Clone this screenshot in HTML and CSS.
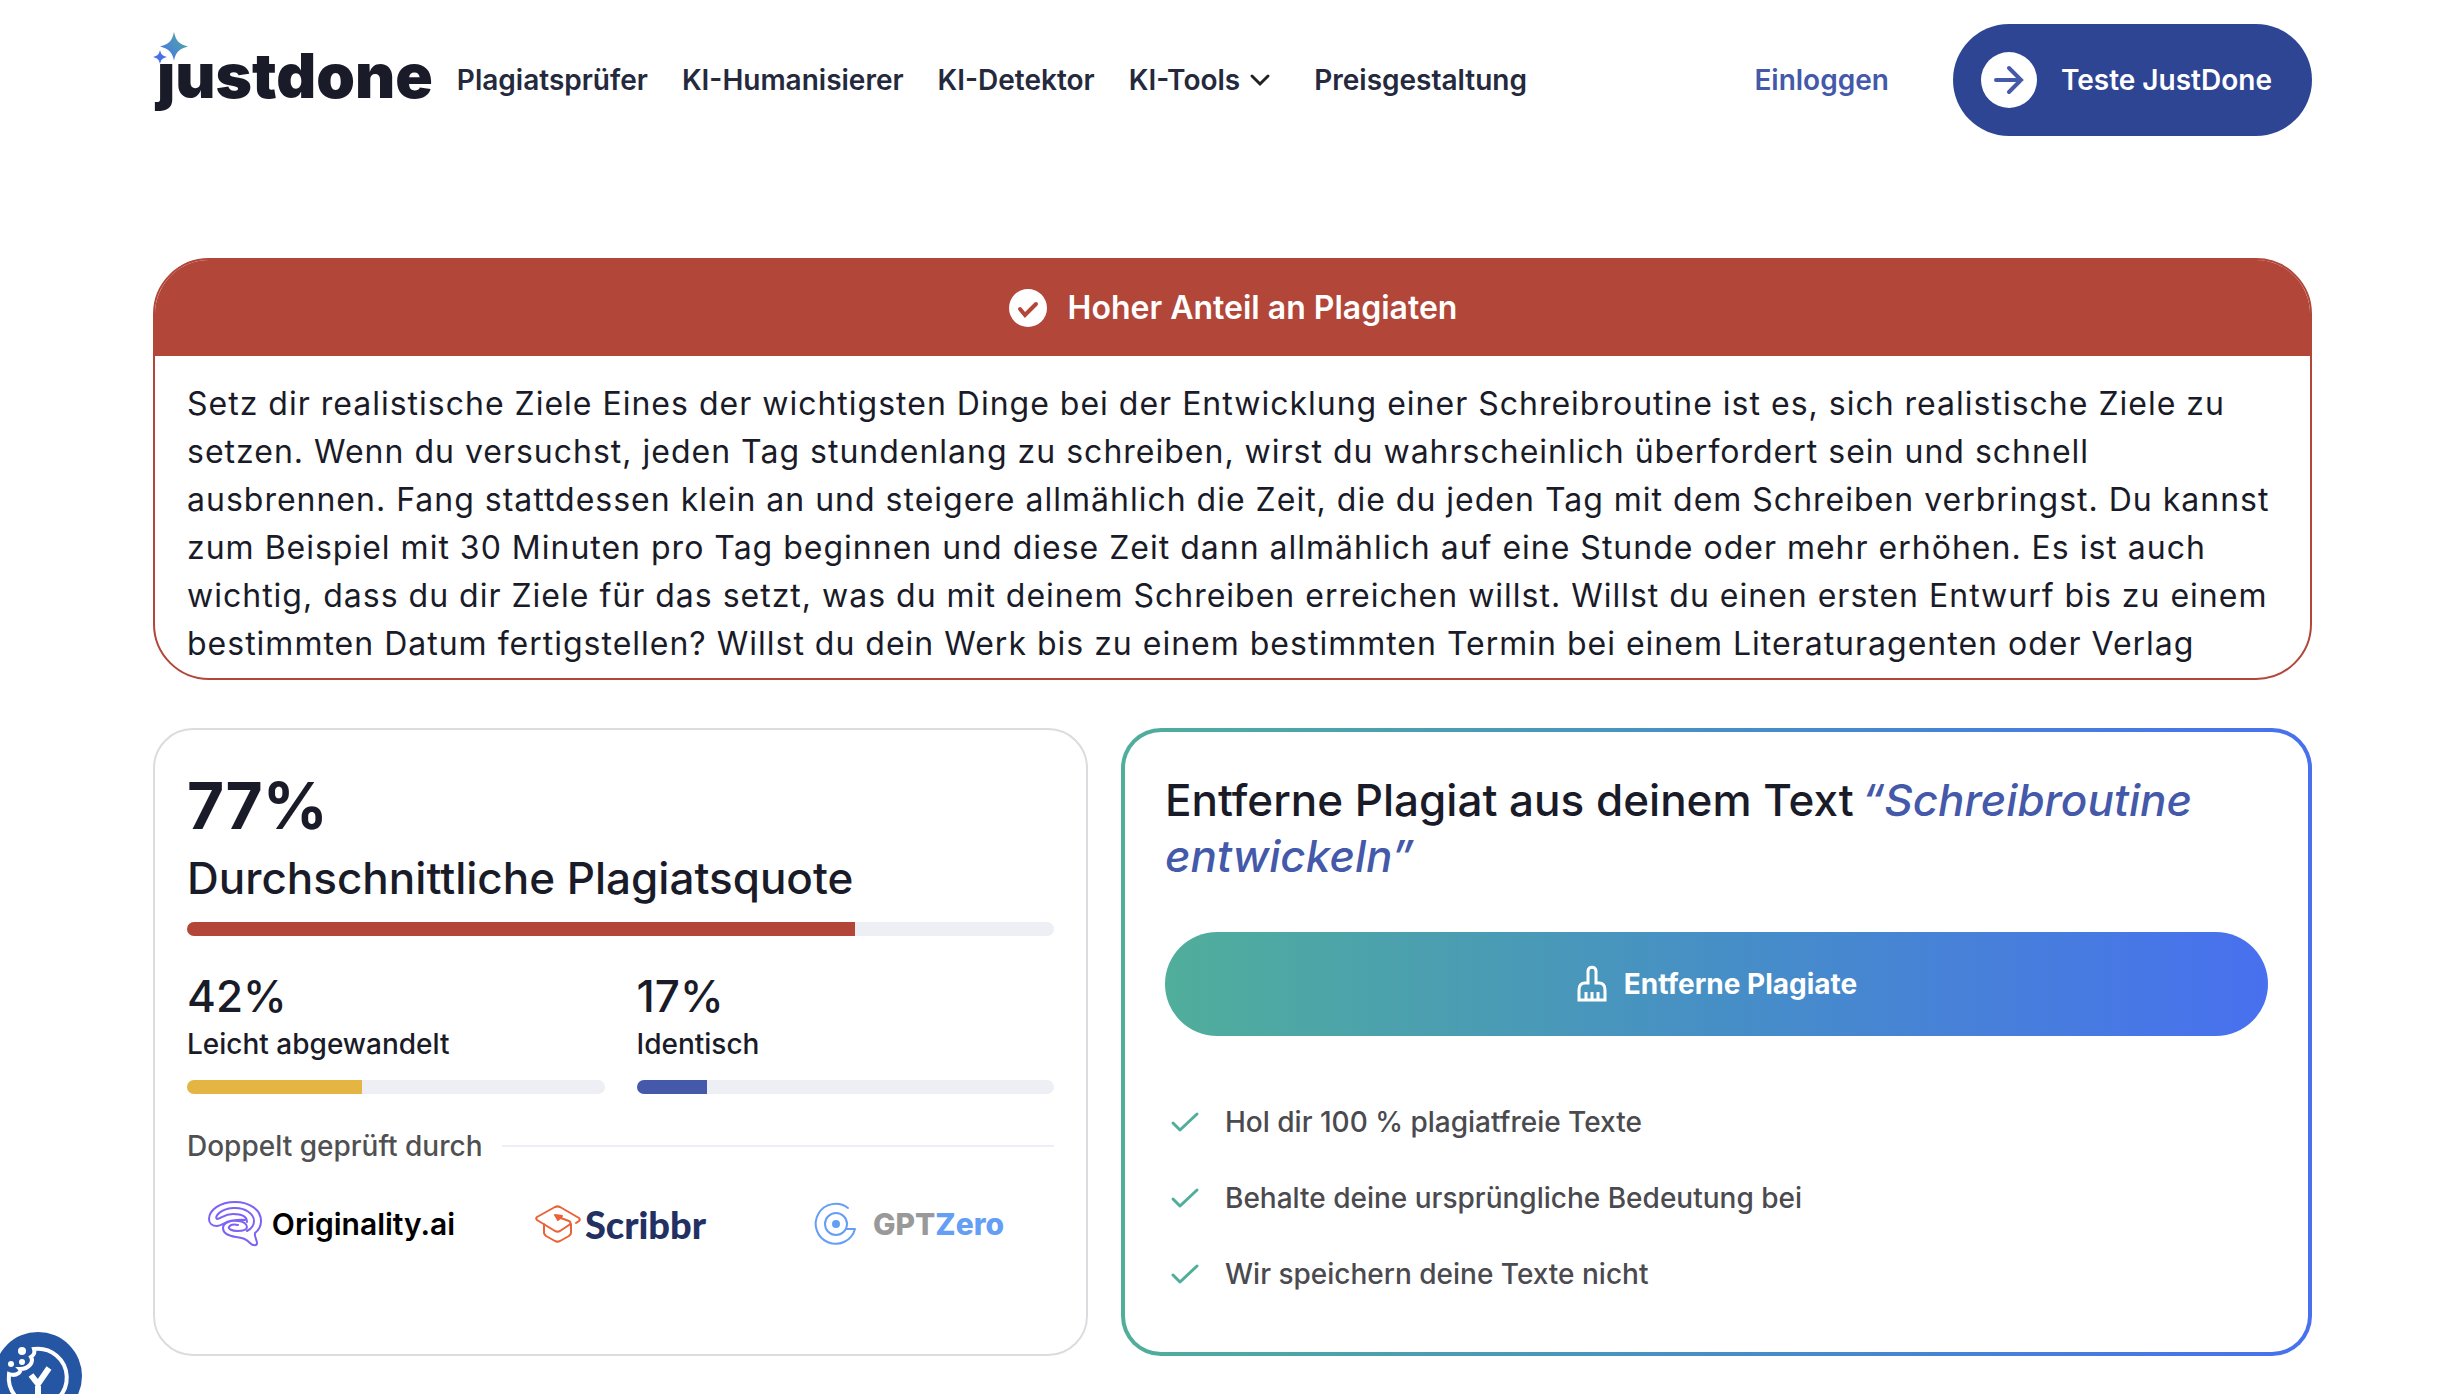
FILE: index.html
```html
<!DOCTYPE html>
<html lang="de">
  <head>
    <meta charset="UTF-8" />
    <meta name="viewport" content="width=device-width, initial-scale=1.0" />
    <title>JustDone Plagiatsprüfer</title>
    <link rel="stylesheet" href="styles.css">
  </head>

  <body>
    <header class="header">
      <a class="logo" href="#" aria-label="justdone">
        <svg class="logo-stars" viewBox="0 0 36 50" aria-hidden="true">
          <defs>
            <linearGradient id="star" x1="1" y1="0" x2="0" y2="1">
              <stop offset="0" stop-color="#50ae9b" />
              <stop offset="1" stop-color="#4870ef" />
            </linearGradient>
          </defs>
          <path fill="url(#star)" d="M21 0c2 9 5 12 14 14.500c-9 2.500-12 5.500-14 14c-2-8.500-5-11.500-14-14c9-2.500 12-5.500 14-14.500z" />
          <path fill="#4870e8" d="M7 18c1 4.500 2.500 6 7 7c-4.500 1-6 2.500-7 7c-1-4.500-2.500-6-7-7c4.500-1 6-2.500 7-7z" />
        </svg>
        <span class="logo-text">ȷustdone</span>
      </a>
      <nav class="nav">
        <a href="#">Plagiatsprüfer</a>
        <a href="#">KI-Humanisierer</a>
        <a href="#">KI-Detektor</a>
        <a class="nav-tools" href="#">KI-Tools
          <svg class="chevron" viewBox="0 0 40 40" aria-hidden="true"><path d="M12 16l8 8l8-8" /></svg>
        </a>
        <a href="#">Preisgestaltung</a>
      </nav>
      <a class="login" href="#">Einloggen</a>
      <button class="try" type="button">
        <span class="try-icon">
          <svg viewBox="0 0 56 56" aria-hidden="true"><path d="M15 28h25M28 16l12 12l-12 12" /></svg>
        </span>
        Teste JustDone
      </button>
    </header>

    <main class="content">
      <section class="result">
        <h2 class="result-title">
          <svg viewBox="0 0 40 40" aria-hidden="true">
            <circle cx="20" cy="20" r="19" fill="#fff" />
            <path d="M12 21l5 6l11-11" fill="none" stroke="#b14639" stroke-width="4" stroke-linecap="round" />
          </svg>
          Hoher Anteil an Plagiaten
        </h2>
        <p class="result-text">
          Setz dir realistische Ziele Eines der wichtigsten Dinge bei der Entwicklung einer Schreibroutine ist es, sich realistische Ziele zu setzen. Wenn du versuchst, jeden Tag stundenlang zu schreiben, wirst du wahrscheinlich überfordert sein und schnell ausbrennen. Fang stattdessen klein an und steigere allmählich die Zeit, die du jeden Tag mit dem Schreiben verbringst. Du kannst zum Beispiel mit 30 Minuten pro Tag beginnen und diese Zeit dann allmählich auf eine Stunde oder mehr erhöhen. Es ist auch wichtig, dass du dir Ziele für das setzt, was du mit deinem Schreiben erreichen willst. Willst du einen ersten Entwurf bis zu einem bestimmten Datum fertigstellen? Willst du dein Werk bis zu einem bestimmten Termin bei einem Literaturagenten oder Verlag
        </p>
      </section>

      <div class="cards">
        <section class="card score">
          <div class="total">77%</div>
          <div class="total-label">Durchschnittliche Plagiatsquote</div>
          <div class="bar"><div class="fill red" style="width: 77%"></div></div>

          <div class="stats">
            <div>
              <div class="stat-value">42%</div>
              <div class="stat-label">Leicht abgewandelt</div>
              <div class="bar"><div class="fill yellow" style="width: 42%"></div></div>
            </div>
            <div>
              <div class="stat-value">17%</div>
              <div class="stat-label">Identisch</div>
              <div class="bar"><div class="fill blue" style="width: 17%"></div></div>
            </div>
          </div>

          <div class="checked">Doppelt geprüft durch</div>
          <div class="partners">
            <div class="partner originality">
              <svg width="54" height="46" viewBox="0 0 54 46" aria-hidden="true">
                <path d="M47 32c4-3 6-7 6-12C53 9 42 1 27 1C12 1 1 9 1 18c0 4 3 7 8 7c5 0 7-4 13-5c6-1 10-2 15-1M47 32c-1 3 2 7 2 10c0 3-4 3-7 0c-5-5-8-5-14-6c-7-1-13-4-13-9c0-5 7-8 15-7c5 0 9 3 9 6c0 3-5 4-10 4c-5 0-9-2-8-4c1-2 4-3 9-2M9 18c-3-2 3-10 16-11c12-1 21 6 21 13c0 4-3 8-7 10M9 18c4 0 7-5 16-5c9 0 14 3 14 8" />
              </svg>
              <span>Originality.ai</span>
            </div>
            <div class="partner scribbr">
              <svg width="46" height="38" viewBox="0 0 46 38" aria-hidden="true">
                <path d="M41 18l3-2c1-1 1-2 0-3L25 2c-2-1-3-1-5 0L2 12c-1 1-1 2 0 3l18 11c2 1 3 1 5 0l9-6c2-1 2-3 0-4l-11-4M9 19v9c0 1 1 2 2 3l9 5c2 1 3 1 5 0l9-5c1-1 2-2 2-3v-9M27 11l-7-1l3 5z" />
              </svg>
              <span>Scribbr</span>
            </div>
            <div class="partner gptzero">
              <svg width="42" height="42" viewBox="0 0 42 42" aria-hidden="true">
                <path d="M33 5A20 20 0 1 0 40 26H31" />
                <circle cx="21" cy="21" r="11" />
                <circle cx="21" cy="21" r="3" fill="#649ef5" />
              </svg>
              <span><span class="gpt">GPT</span>Zero</span>
            </div>
          </div>
        </section>

        <section class="card remove">
          <h2 class="remove-title">Entferne Plagiat aus deinem Text<em>“Schreibroutine entwickeln”</em></h2>
          <button class="remove-btn" type="button">
            <svg width="32" height="40" viewBox="0 0 32 40" aria-hidden="true">
              <path d="M3 36V26c0-5 2-7 6-7h3V7c0-5 8-5 8 0v12h3c4 0 6 2 6 7v10zM10 35v-7M16 35v-7M22 35v-7" />
            </svg>
            Entferne Plagiate
          </button>
          <ul class="benefits">
            <li><svg viewBox="0 0 40 40" aria-hidden="true"><path d="M8 21l7 7l17-16" /></svg>Hol dir 100 % plagiatfreie Texte</li>
            <li><svg viewBox="0 0 40 40" aria-hidden="true"><path d="M8 21l7 7l17-16" /></svg>Behalte deine ursprüngliche Bedeutung bei</li>
            <li><svg viewBox="0 0 40 40" aria-hidden="true"><path d="M8 21l7 7l17-16" /></svg>Wir speichern deine Texte nicht</li>
          </ul>
        </section>
      </div>
    </main>

    <!-- Cookie settings, half off the corner -->
    <button class="cookie" type="button" aria-label="Cookie-Einstellungen">
      <svg viewBox="0 0 88 88" aria-hidden="true">
        <circle cx="44" cy="44" r="44" fill="#2456a4" />
        <path d="M40 17A29 29 0 1 1 15 42C23 45 28 39 26 37C35 37 40 30 37 25C40 23 41 20 40 17Z" fill="none" stroke="#fff" stroke-width="4" />
        <circle cx="28" cy="19" r="4" fill="#fff" />
        <circle cx="17" cy="32" r="3" fill="#fff" />
        <circle cx="28" cy="30" r="3" fill="#fff" />
        <path d="M37 43l7 9l11-16M44 54v10" fill="none" stroke="#fff" stroke-width="6" />
      </svg>
    </button>
  </body>
</html>
```
FILE: styles.css
```css
* {
  box-sizing: border-box;
}

body {
  margin: 0;
  background: #fff;
  color: #1a1b28;
  font-family: Inter, "Liberation Sans", sans-serif;
  font-size: 28px;
  line-height: 40px;
}

h2,
p,
ul {
  margin: 0;
  padding: 0;
}

a {
  text-decoration: none;
}

button {
  border: 0;
  cursor: pointer;
  font-family: inherit;
}

/* Header */
.header {
  display: flex;
  align-items: center;
  height: 160px;
  padding: 0 148px 0 153px;
}

.logo {
  position: relative;
  color: #1a1b28;
  padding: 0 0 8px 4px;
  margin-right: 24px;
}

.logo-stars {
  position: absolute;
  left: 0;
  top: -12px;
  width: 36px;
  height: 50px;
}

.logo-text {
  display: block;
  font-size: 62px;
  font-weight: 900;
  line-height: 64px;
}

.nav {
  display: flex;
  gap: 34px;
}

.nav a {
  color: #24293d;
  font-weight: 600;
}

.nav .nav-tools {
  display: flex;
  align-items: center;
}

.chevron {
  width: 40px;
  height: 40px;
  fill: none;
  stroke: #222;
  stroke-width: 3;
  stroke-linecap: round;
}

.login {
  margin-left: auto;
  margin-right: 64px;
  color: #4459a9;
  font-weight: 600;
}

.try {
  display: flex;
  align-items: center;
  gap: 24px;
  height: 112px;
  padding: 0 40px 0 28px;
  border-radius: 56px;
  background: #2e4593;
  color: #fff;
  font-size: 28px;
  font-weight: 600;
}

.try-icon {
  width: 56px;
  height: 56px;
  border-radius: 50%;
  background: #fff;
}

.try-icon svg {
  fill: none;
  stroke: #4459a9;
  stroke-width: 4;
  stroke-linecap: round;
}

/* Main content */
.content {
  padding: 98px 148px 38px 153px;
}

.result {
  border: 2px solid #b14639;
  border-radius: 56px;
  overflow: hidden;
}

.result-title {
  display: flex;
  align-items: center;
  justify-content: center;
  gap: 20px;
  height: 96px;
  background: #b14639;
  color: #fff;
  font-size: 32px;
  font-weight: 600;
}

.result-title svg {
  width: 40px;
  height: 40px;
}

.result-text {
  padding: 24px 32px 10px;
  font-size: 32px;
  line-height: 48px;
  letter-spacing: 1px;
}

.cards {
  display: grid;
  grid-template-columns: 935fr 1191fr;
  gap: 33px;
  margin-top: 48px;
}

.card {
  min-height: 628px;
  border-radius: 40px;
}

/* Score */
.score {
  padding: 40px 32px;
  border: 2px solid #dcdce0;
}

.total {
  font-size: 64px;
  font-weight: 700;
  line-height: 72px;
}

.total-label {
  margin-bottom: 8px;
  font-size: 44px;
  font-weight: 500;
  line-height: 72px;
}

.bar {
  height: 14px;
  border-radius: 7px;
  background: #eeeff5;
  overflow: hidden;
}

.fill {
  height: 100%;
}

.red {
  background: #b14639;
}

.yellow {
  background: #e5b544;
}

.blue {
  background: #4459a9;
}

.stats {
  display: grid;
  grid-template-columns: 1fr 1fr;
  gap: 32px;
  margin-top: 32px;
}

.stat-value {
  font-size: 44px;
  font-weight: 500;
  line-height: 56px;
}

.stat-label {
  margin-bottom: 16px;
  font-weight: 500;
}

.checked {
  display: flex;
  align-items: center;
  gap: 20px;
  margin-top: 32px;
  color: #505052;
  font-weight: 500;
}

.checked::after {
  content: "";
  flex: 1;
  height: 2px;
  background: #eeeef8;
}

.partners {
  display: grid;
  grid-template-columns: repeat(3, 1fr);
  margin-top: 34px;
}

.partner {
  display: flex;
  align-items: center;
  justify-content: center;
  gap: 10px;
  height: 48px;
}

.partner svg {
  fill: none;
  stroke-width: 2;
  stroke-linejoin: round;
  stroke-linecap: round;
  overflow: visible;
}

.originality {
  color: #000;
  font-size: 30px;
  font-weight: 600;
}

.originality svg {
  stroke: #7d62f5;
}

.scribbr {
  gap: 4px;
  color: #233062;
  font-family: Lato, sans-serif;
  font-size: 38px;
  font-weight: 900;
}

.scribbr svg {
  stroke: #ea6236;
}

.gptzero {
  gap: 16px;
  color: #649ef5;
  font-size: 30px;
  font-weight: 800;
}

.gptzero svg {
  stroke: #649ef5;
}

.gpt {
  color: #999;
}

/* Remove plagiarism */
.remove {
  padding: 40px;
  border: 4px solid transparent;
  background:
    linear-gradient(#fff, #fff) padding-box,
    linear-gradient(90deg, #50ae9b, #468fc6 50%, #4870ef) border-box;
}

.remove-title {
  font-size: 44px;
  font-weight: 500;
  line-height: 56px;
}

.remove-title em {
  margin-left: 8px;
  color: #4459a9;
}

.remove-btn {
  display: flex;
  align-items: center;
  justify-content: center;
  gap: 16px;
  width: 100%;
  height: 104px;
  margin-top: 48px;
  border-radius: 52px;
  background: linear-gradient(90deg, #50ae9b, #468fc6 50%, #4870ef);
  color: #fff;
  font-size: 28px;
  font-weight: 700;
}

.remove-btn svg {
  fill: none;
  stroke: #fff;
  stroke-width: 3;
}

.benefits {
  display: flex;
  flex-direction: column;
  gap: 36px;
  margin-top: 66px;
  list-style: none;
}

.benefits li {
  display: flex;
  align-items: center;
  gap: 20px;
  color: #4a4a4f;
  font-weight: 500;
}

.benefits svg {
  width: 40px;
  height: 40px;
  fill: none;
  stroke: #50ae9b;
  stroke-width: 3;
  stroke-linecap: round;
  stroke-linejoin: round;
}

.cookie {
  position: fixed;
  left: -6px;
  bottom: -26px;
  width: 88px;
  height: 88px;
  padding: 0;
  border-radius: 50%;
  background: none;
}
```
